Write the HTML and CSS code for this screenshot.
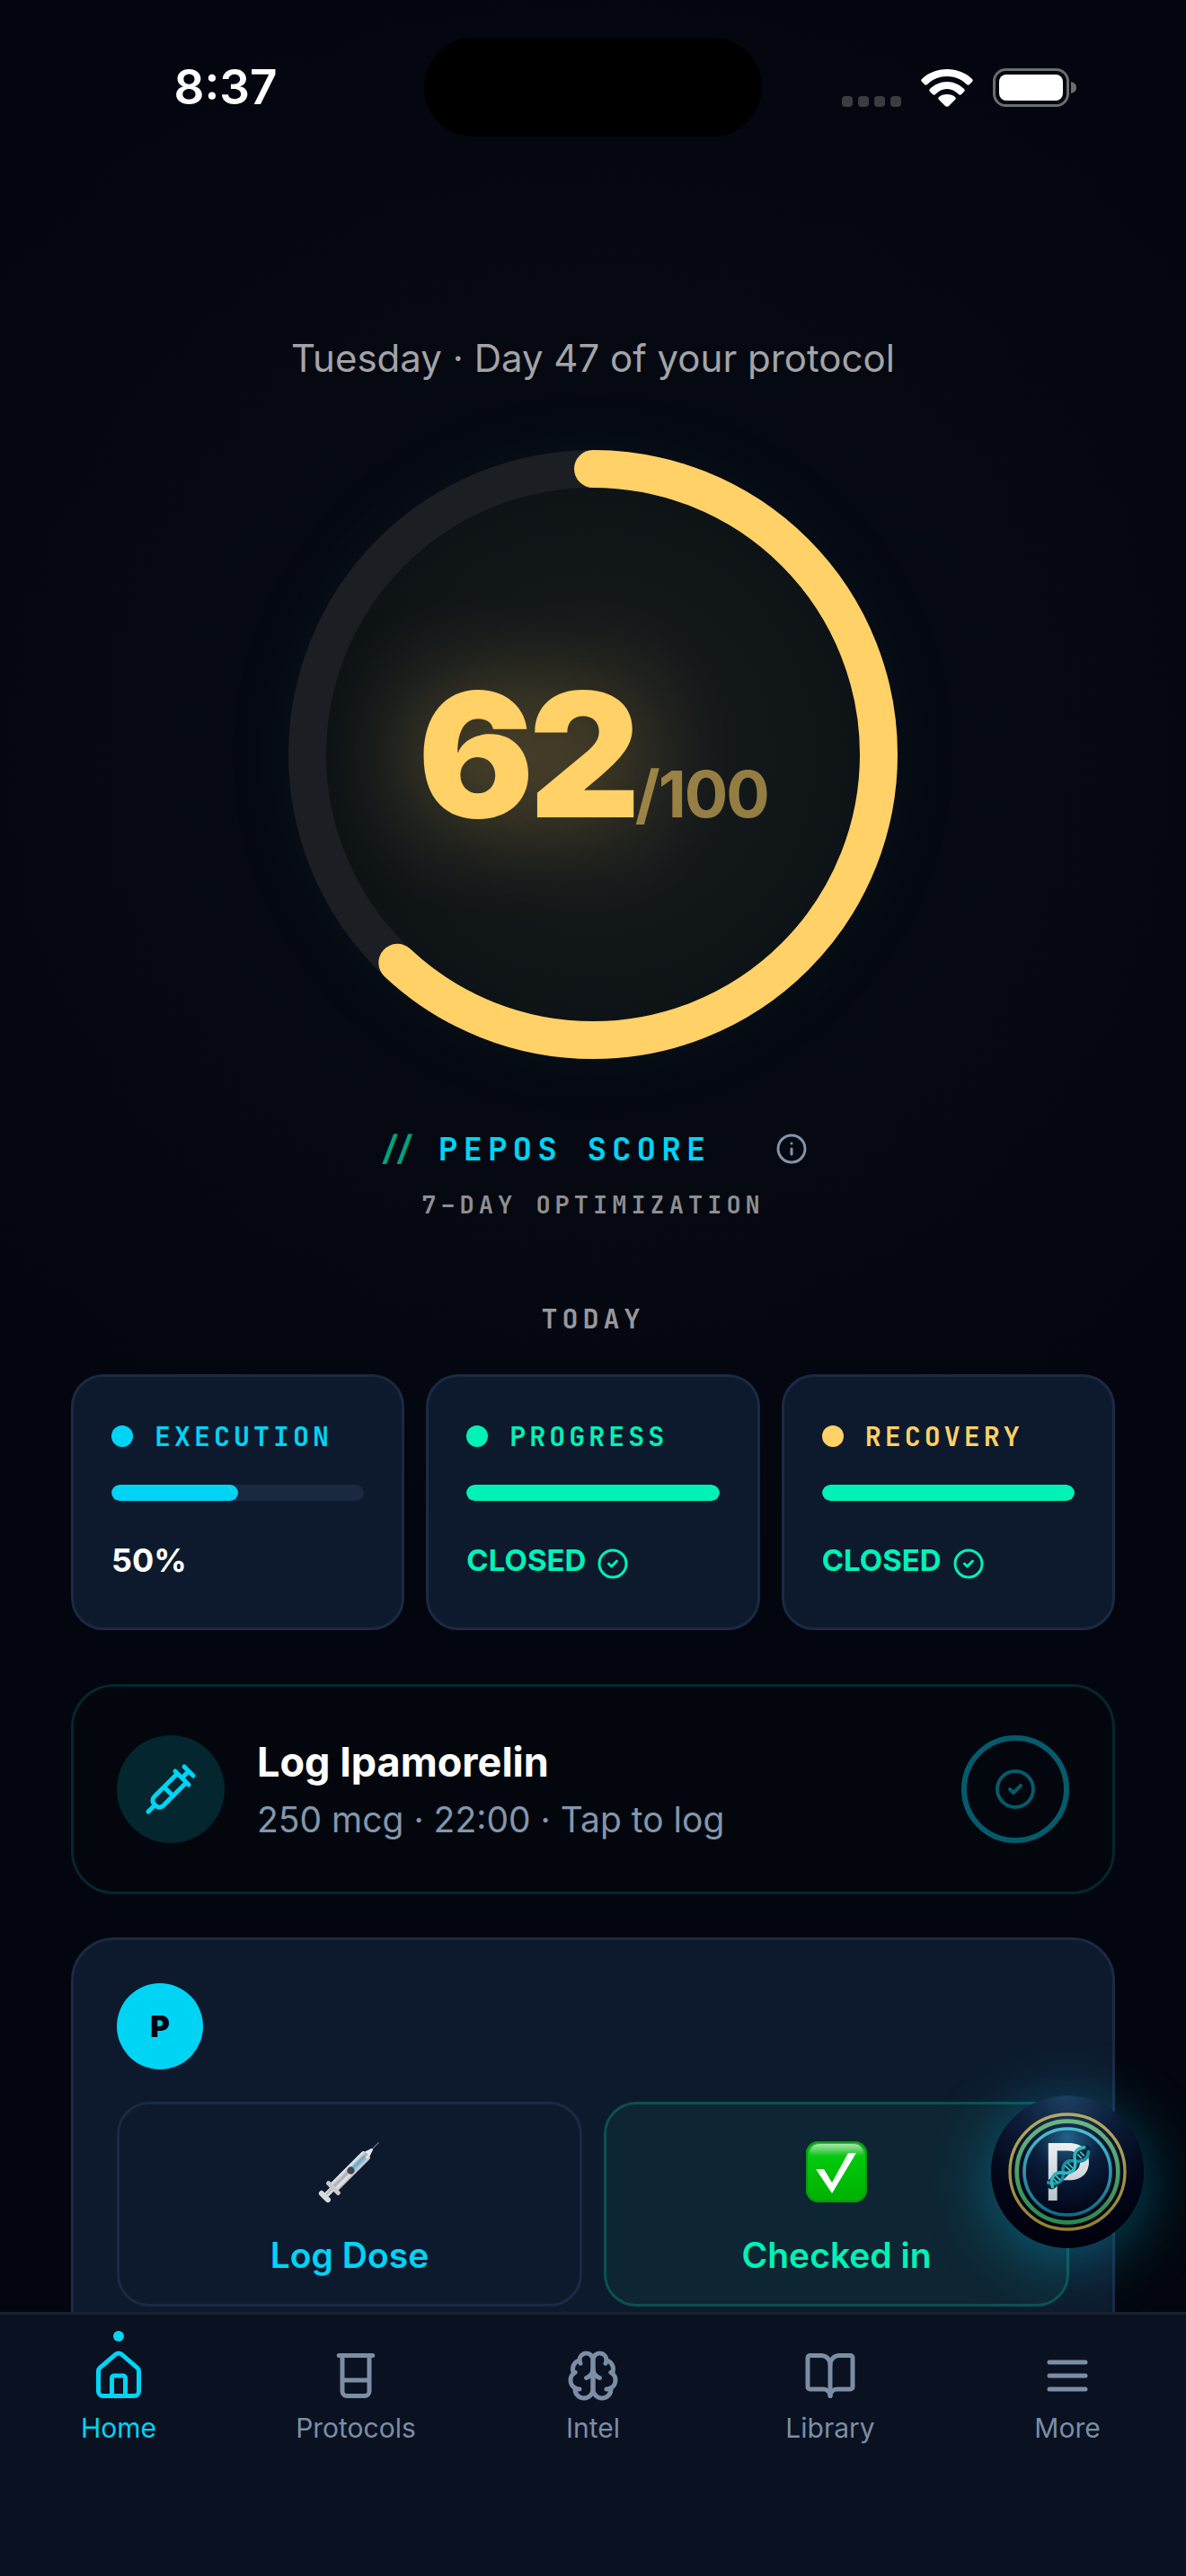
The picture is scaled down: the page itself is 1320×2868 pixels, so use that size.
FILE: index.html
```html
<!DOCTYPE html>
<html lang="en">
<head>
    <meta charset="UTF-8">
    <meta name="viewport" content="width=device-width, initial-scale=1.0">
    <title>PepOS</title>
    <link rel="stylesheet" href="styles.css">
</head>
<body>
    <div class="app">
        <header class="status-bar">
            <time class="status-time">8:37</time>
            <div class="island"></div>
            <div class="status-icons">
                <svg class="signal" viewBox="0 0 66 12" aria-hidden="true">
                    <rect x="0" width="12" height="12" rx="4"/>
                    <rect x="18" width="12" height="12" rx="4"/>
                    <rect x="36" width="12" height="12" rx="4"/>
                    <rect x="54" width="12" height="12" rx="4"/>
                </svg>
                <svg class="wifi" viewBox="0 0 58 42" aria-hidden="true">
                    <path d="M29 0C40 0 50 4 57 11c1 1 1 2 0 3l-3 3c-1 1-2 1-3 0-6-6-14-9-22-9S13 11 7 17c-1 1-2 1-3 0l-3-3c-1-1-1-2 0-3C8 4 18 0 29 0z"/>
                    <path d="M29 14c7 0 14 3 19 8 1 1 1 2 0 3l-3 3c-1 1-2 1-3 0-4-4-8-6-13-6s-9 2-13 6c-1 1-2 1-3 0l-3-3c-1-1-1-2 0-3 5-5 12-8 19-8z"/>
                    <path d="M29 28c4 0 7 1 9 3 1 1 1 2 0 3l-7 7c-1 1-3 1-4 0l-7-7c-1-1-1-2 0-3 2-2 5-3 9-3z"/>
                </svg>
                <svg class="battery" viewBox="0 0 93 43" aria-hidden="true">
                    <rect x="1.500" y="1.500" width="82" height="40" rx="13" class="battery-shell"/>
                    <rect x="7" y="7" width="71" height="29" rx="8" fill="#fff"/>
                    <path d="M87 15c4 1 6 3 6 6.500s-2 5.500-6 6.500z" class="battery-cap"/>
                </svg>
            </div>
        </header>

        <main class="screen">
            <section class="hero">
                <p class="day">Tuesday · Day 47 of your protocol</p>
                <div class="ring">
                    <svg class="ring-svg" viewBox="0 0 678 678" aria-hidden="true">
                        <circle class="ring-track" cx="339" cy="339" r="318"/>
                        <circle class="ring-fill" cx="339" cy="339" r="318" pathLength="100" stroke-dasharray="62 100" transform="rotate(-90 339 339)"/>
                    </svg>
                    <p class="score"><span class="score-value">62</span><span class="score-max">/100</span></p>
                </div>
                <div class="score-row">
                    <span class="slashes">//</span>
                    <h1 class="score-title">PEPOS SCORE</h1>
                    <button class="info-btn" type="button" aria-label="About the score">
                        <svg class="icon" viewBox="0 0 24 24"><circle cx="12" cy="12" r="10"/><path d="M12 16v-4M12 8h.01"/></svg>
                    </button>
                </div>
                <p class="score-sub">7–DAY OPTIMIZATION</p>
            </section>

            <h2 class="today">TODAY</h2>
            <section class="stats">
                <article class="card stat cyan">
                    <h3 class="stat-head"><span class="dot"></span>EXECUTION</h3>
                    <div class="bar"><div class="bar-fill" style="width: 50%"></div></div>
                    <p class="stat-value"><span>50%</span></p>
                </article>
                <article class="card stat green">
                    <h3 class="stat-head"><span class="dot"></span>PROGRESS</h3>
                    <div class="bar"><div class="bar-fill closed" style="width: 100%"></div></div>
                    <p class="stat-value is-closed"><span>CLOSED</span>
                        <svg class="icon" viewBox="0 0 24 24"><circle cx="12" cy="12" r="10"/><path d="m9 12 2 2 4-4"/></svg>
                    </p>
                </article>
                <article class="card stat yellow">
                    <h3 class="stat-head"><span class="dot"></span>RECOVERY</h3>
                    <div class="bar"><div class="bar-fill closed" style="width: 100%"></div></div>
                    <p class="stat-value is-closed"><span>CLOSED</span>
                        <svg class="icon" viewBox="0 0 24 24"><circle cx="12" cy="12" r="10"/><path d="m9 12 2 2 4-4"/></svg>
                    </p>
                </article>
            </section>

            <button class="log-card" type="button">
                <span class="log-icon">
                    <svg class="icon" viewBox="0 0 24 24"><path d="m18 2 4 4M17 7l3-3M19 9 8.700 19.300c-1 1-2.500 1-3.400 0l-.6-.6c-1-1-1-2.500 0-3.400L15 5M9 11l4 4M5 19l-3 3M14 4l6 6"/></svg>
                </span>
                <span class="log-text">
                    <span class="log-title">Log Ipamorelin</span>
                    <span class="log-sub">250 mcg · 22:00 · Tap to log</span>
                </span>
                <span class="log-check">
                    <svg class="icon" viewBox="0 0 24 24"><circle cx="12" cy="12" r="10"/><path d="m9 12 2 2 4-4"/></svg>
                </span>
            </button>

            <section class="card coach">
                <div class="avatar">P</div>
                <div class="actions">
                    <button class="action" type="button">
                        <svg class="emoji" viewBox="0 0 72 72" aria-hidden="true">
                            <defs>
                                <linearGradient id="barrel" x1="0" x2="1">
                                    <stop offset="0" stop-color="#f2f2f4"/>
                                    <stop offset=".45" stop-color="#a9a9b0"/>
                                    <stop offset=".7" stop-color="#e9e9ec"/>
                                    <stop offset="1" stop-color="#b9b9bf"/>
                                </linearGradient>
                                <linearGradient id="liquid" x1="0" x2="1">
                                    <stop offset="0" stop-color="#cfe6f0"/>
                                    <stop offset=".4" stop-color="#6fa3bf"/>
                                    <stop offset="1" stop-color="#a9cbdc"/>
                                </linearGradient>
                            </defs>
                            <g transform="translate(36 36) rotate(45)">
                                <path d="M0-46V-34" stroke="#7c8793" stroke-width="1"/>
                                <path d="M-1-36h2l3 9h-8z" fill="#dcecef"/>
                                <rect x="-3" y="22" width="6" height="17" fill="url(#barrel)"/>
                                <rect x="-6" y="-28" width="12" height="54" rx="3" fill="url(#barrel)"/>
                                <rect x="-4" y="-24" width="8" height="21" rx="1" fill="url(#liquid)"/>
                                <ellipse cx="0" cy="-2" rx="4" ry="4" fill="#3d4650"/>
                                <rect x="-10" y="23" width="20" height="5" rx="2" fill="#c9c9cf"/>
                                <rect x="-8" y="36" width="16" height="6" rx="3" fill="#dadadd"/>
                            </g>
                        </svg>
                        <span>Log Dose</span>
                    </button>
                    <button class="action done" type="button">
                        <svg class="emoji" viewBox="0 0 72 72" aria-hidden="true">
                            <defs>
                                <linearGradient id="tile" y2="1" x2="0">
                                    <stop offset="0" stop-color="#2fc03a"/>
                                    <stop offset=".3" stop-color="#00c80c"/>
                                    <stop offset="1" stop-color="#00b000"/>
                                </linearGradient>
                                <linearGradient id="shine" y2="1" x2="0">
                                    <stop offset="0" stop-color="#fff" stop-opacity=".6"/>
                                    <stop offset="1" stop-color="#fff" stop-opacity="0"/>
                                </linearGradient>
                            </defs>
                            <rect x="2" y="2" width="68" height="68" rx="14" fill="url(#tile)"/>
                            <rect x="3" y="3" width="66" height="66" rx="13" fill="none" stroke="#0a9a12" stroke-width="2"/>
                            <path d="M6 18C6 9 10 5 18 5h36c8 0 12 4 12 13z" fill="url(#shine)"/>
                            <path d="M13 33h9l9 15 18-33h9L31 60z" fill="#fff"/>
                        </svg>
                        <span>Checked in</span>
                    </button>
                </div>
            </section>
        </main>

        <button class="fab" type="button" aria-label="Open assistant">
            <svg viewBox="0 0 510 510" aria-hidden="true">
                <defs>
                    <radialGradient id="orb" cx=".5" cy="0" r="1">
                        <stop offset="0" stop-color="#1d4063"/>
                        <stop offset=".35" stop-color="#0c1c38"/>
                        <stop offset=".7" stop-color="#020618"/>
                        <stop offset="1" stop-color="#00000c"/>
                    </radialGradient>
                    <radialGradient id="core" cx=".5" cy=".1" r=".9">
                        <stop offset="0" stop-color="#23628a"/>
                        <stop offset=".45" stop-color="#0a1d3c"/>
                        <stop offset="1" stop-color="#010515"/>
                    </radialGradient>
                    <linearGradient id="gold" x2="0" y2="1"><stop offset="0" stop-color="#b5a964"/><stop offset="1" stop-color="#91812f"/></linearGradient>
                    <linearGradient id="leaf" x2="0" y2="1"><stop offset="0" stop-color="#6cb582"/><stop offset="1" stop-color="#2c8a4c"/></linearGradient>
                    <linearGradient id="aqua" x2="0" y2="1"><stop offset="0" stop-color="#4fbdd0"/><stop offset="1" stop-color="#0b6d85"/></linearGradient>
                    <linearGradient id="steel" x2="0" y2="1"><stop offset="0" stop-color="#ffffff"/><stop offset="1" stop-color="#a9b5bf"/></linearGradient>
                </defs>
                <circle cx="255" cy="255" r="255" fill="url(#orb)"/>
                <circle cx="255" cy="255" r="145" fill="url(#core)"/>
                <g fill="none">
                    <circle cx="255" cy="255" r="192" stroke="url(#gold)" stroke-width="10"/>
                    <circle cx="255" cy="255" r="169" stroke="url(#leaf)" stroke-width="14"/>
                    <circle cx="255" cy="255" r="144" stroke="url(#aqua)" stroke-width="11"/>
                </g>
                <text x="170" y="350" class="fab-letter">P</text>
                <g transform="translate(259 240) rotate(-45)" fill="none" stroke-linecap="round">
                    <path d="M-80 0H80" stroke="#06243a" stroke-width="34"/>
                    <path d="M-84-12C-68 20-42 20-26 0S12-26 30 0 66 24 84 10" stroke="#1c8f9e" stroke-width="11"/>
                    <path d="M-84 8C-68-22-42-22-26 0S12 26 30 0 66-24 84-10" stroke="#2fb5bd" stroke-width="11"/>
                    <path d="M-62-8v16M-50-8v16M-4-10v20M8-10v20M52-8v16M64-8v16" stroke="#3ccfce" stroke-width="5"/>
                </g>
            </svg>
        </button>

        <nav class="tab-bar">
            <a class="tab active" href="#home">
                <span class="tab-dot"></span>
                <svg class="icon" viewBox="0 0 24 24"><path d="M15 21v-8a1 1 0 0 0-1-1h-4a1 1 0 0 0-1 1v8"/><path d="M3 10a2 2 0 0 1 .709-1.528l7-5.999a2 2 0 0 1 2.582 0l7 5.999A2 2 0 0 1 21 10v9a2 2 0 0 1-2 2H5a2 2 0 0 1-2-2z"/></svg>
                <span>Home</span>
            </a>
            <a class="tab" href="#protocols">
                <span class="tab-dot"></span>
                <svg class="icon" viewBox="0 0 24 24"><path d="M4.500 3h15M6 3v16a2 2 0 0 0 2 2h8a2 2 0 0 0 2-2V3M6 14h12"/></svg>
                <span>Protocols</span>
            </a>
            <a class="tab" href="#intel">
                <span class="tab-dot"></span>
                <svg class="icon" viewBox="0 0 24 24"><path d="M12 5a3 3 0 1 0-5.997.125 4 4 0 0 0-2.526 5.770 4 4 0 0 0 .556 6.588A4 4 0 1 0 12 18Z"/><path d="M12 5a3 3 0 1 1 5.997.125 4 4 0 0 1 2.526 5.770 4 4 0 0 1-.556 6.588A4 4 0 1 1 12 18Z"/><path d="M15 13a4.500 4.500 0 0 1-3-4 4.500 4.500 0 0 1-3 4"/><path d="M17.599 6.500a3 3 0 0 0 .399-1.375M6.003 5.125A3 3 0 0 0 6.401 6.500M3.477 10.896a4 4 0 0 1 .585-.396M19.938 10.500a4 4 0 0 1 .585.396M6 18a4 4 0 0 1-1.967-.516M19.967 17.484A4 4 0 0 1 18 18"/></svg>
                <span>Intel</span>
            </a>
            <a class="tab" href="#library">
                <span class="tab-dot"></span>
                <svg class="icon" viewBox="0 0 24 24"><path d="M12 7v14"/><path d="M3 18a1 1 0 0 1-1-1V4a1 1 0 0 1 1-1h5a4 4 0 0 1 4 4 4 4 0 0 1 4-4h5a1 1 0 0 1 1 1v13a1 1 0 0 1-1 1h-6a3 3 0 0 0-3 3 3 3 0 0 0-3-3z"/></svg>
                <span>Library</span>
            </a>
            <a class="tab" href="#more">
                <span class="tab-dot"></span>
                <svg class="icon" viewBox="0 0 24 24"><path d="M4 6h16M4 12h16M4 18h16"/></svg>
                <span>More</span>
            </a>
        </nav>
    </div>
</body>
</html>
```
FILE: styles.css
```css
:root {
    --cyan: #00d4f5;
    --green: #00f2b6;
    --yellow: #ffd166;
    --muted: #8294ab;
    --card: #0d1a2d;
    --line: #1a2a44;
    --mono: 'JetBrains Mono', 'DejaVu Sans Mono', monospace;
}
* {
    margin: 0;
    padding: 0;
    box-sizing: border-box;
}
body {
    font-family: Inter, 'Liberation Sans', sans-serif;
    background: #03060e;
    color: #fff;
}
button {
    font: inherit;
    color: inherit;
    background: none;
    border: none;
    cursor: pointer;
}
.icon {
    display: block;
    fill: none;
    stroke: currentColor;
    stroke-width: 2;
    stroke-linecap: round;
    stroke-linejoin: round;
}
.app {
    position: relative;
    height: 100vh;
    display: flex;
    flex-direction: column;
    background: radial-gradient(circle at 50% 840px, #060b14 0, #050810 600px, #03060e 900px);
}

/* status bar */
.status-bar {
    display: grid;
    grid-template-columns: 1fr 376px 1fr;
    align-items: center;
    padding-top: 42px;
}
.status-time {
    padding-left: 30px;
    text-align: center;
    font-size: 53px;
    line-height: 60px;
    font-weight: 600;
}
.island {
    height: 110px;
    border-radius: 55px;
    background: #000;
}
.status-icons {
    display: flex;
    justify-content: center;
    align-items: flex-end;
    gap: 22px;
    padding-right: 34px;
}
.signal {
    width: 66px;
    height: 12px;
    fill: #3a3c42;
}
.wifi {
    width: 58px;
    height: 42px;
    fill: #fff;
}
.battery {
    width: 93px;
    height: 43px;
}
.battery-shell {
    fill: none;
    stroke: #6c6d70;
    stroke-width: 3;
}
.battery-cap {
    fill: #6c6d70;
}

.screen {
    flex: 1;
    min-height: 0;
    overflow-y: auto;
    scrollbar-width: none;
    padding: 223px 79px 48px;
}

/* score ring */
.hero {
    display: flex;
    flex-direction: column;
    align-items: center;
}
.day {
    font-size: 42px;
    line-height: 48px;
    color: #a3a4a7;
}
.ring {
    display: grid;
    place-items: center;
    width: 678px;
    margin-top: 78px;
    border-radius: 50%;
    background: radial-gradient(circle closest-side, #191c1b 0, #12171a 55%, #0b1114 100%);
    box-shadow: 0 0 80px rgba(60, 120, 130, 0.08);
}
.ring-svg,
.score {
    grid-area: 1 / 1;
}
.ring-svg {
    width: 100%;
    fill: none;
    stroke-width: 42;
    stroke-linecap: round;
}
.ring-track {
    stroke: #1b1e23;
}
.ring-fill {
    stroke: var(--yellow);
}
.score {
    display: flex;
    align-items: baseline;
    color: var(--yellow);
}
.score-value {
    font-size: 192px;
    line-height: 192px;
    font-weight: 900;
    letter-spacing: -6px;
    text-shadow: 0 0 120px rgba(255, 209, 102, 0.45);
}
.score-max {
    font-size: 72px;
    font-weight: 700;
    letter-spacing: -2px;
    opacity: 0.55;
}
.score-row {
    display: flex;
    align-items: center;
    gap: 24px;
    margin-top: 76px;
    font-family: var(--mono);
    font-size: 36px;
    line-height: 48px;
}
.slashes {
    font-weight: 700;
    color: #00a37d;
}
.score-title {
    font-size: 36px;
    font-weight: 700;
    letter-spacing: 6px;
    color: var(--cyan);
}
.info-btn {
    margin-left: 48px;
    color: var(--muted);
}
.info-btn .icon,
.stat-value .icon {
    width: 36px;
    height: 36px;
}
.score-sub {
    margin-top: 20px;
    font-family: var(--mono);
    font-size: 27px;
    line-height: 36px;
    font-weight: 700;
    letter-spacing: 5px;
    color: #8e8f92;
}

/* today cards */
.today {
    margin: 91px 0 44px;
    text-align: center;
    font-family: var(--mono);
    font-size: 30px;
    line-height: 36px;
    letter-spacing: 5px;
    color: #97989b;
}
.card {
    background: var(--card);
    border: 3px solid var(--line);
    border-radius: 36px;
}
.stats {
    display: grid;
    grid-template-columns: repeat(3, 1fr);
    gap: 24px;
}
.stat {
    padding: 48px 42px 53px;
}
.cyan {
    color: var(--cyan);
}
.green {
    color: var(--green);
}
.yellow {
    color: var(--yellow);
}
.stat-head {
    display: flex;
    align-items: center;
    gap: 24px;
    font-family: var(--mono);
    font-size: 30px;
    line-height: 36px;
    letter-spacing: 4px;
}
.dot {
    width: 24px;
    height: 24px;
    border-radius: 50%;
    background: currentColor;
}
.bar {
    height: 18px;
    margin: 36px 0 48px;
    border-radius: 9px;
    background: #1a2840;
    overflow: hidden;
}
.bar-fill {
    height: 100%;
    border-radius: 9px;
    background: var(--cyan);
}
.bar-fill.closed {
    background: var(--green);
}
.stat-value {
    display: flex;
    gap: 12px;
    height: 40px;
    font-size: 36px;
    line-height: 36px;
    font-weight: 700;
    color: #fff;
}
.stat-value.is-closed {
    font-size: 33px;
    color: var(--green);
}
.stat-value .icon {
    align-self: flex-end;
}

/* log card */
.log-card {
    display: flex;
    align-items: center;
    gap: 36px;
    width: 100%;
    margin: 60px 0 48px;
    padding: 54px 48px;
    text-align: left;
    background: #03070d;
    border: 3px solid #05262f;
    border-radius: 48px;
}
.log-icon,
.log-check {
    display: grid;
    place-items: center;
    width: 120px;
    height: 120px;
    border-radius: 50%;
}
.log-icon {
    background: #04262f;
    color: var(--cyan);
}
.log-icon .icon {
    width: 60px;
    height: 60px;
}
.log-text {
    flex: 1;
    display: flex;
    flex-direction: column;
    gap: 8px;
}
.log-title {
    font-size: 45px;
    line-height: 60px;
    font-weight: 700;
}
.log-sub {
    font-size: 39px;
    line-height: 52px;
    color: #8496ac;
}
.log-check {
    border: 6px solid #045b6b;
    color: #045b6b;
}
.log-check .icon {
    width: 48px;
    height: 48px;
}

/* coach card */
.coach {
    padding: 48px;
    border-radius: 48px;
}
.avatar {
    width: 96px;
    height: 96px;
    border-radius: 50%;
    background: var(--cyan);
    color: #03060e;
    font-size: 33px;
    line-height: 96px;
    font-weight: 900;
    text-align: center;
}
.actions {
    display: grid;
    grid-template-columns: 1fr 1fr;
    gap: 24px;
    margin-top: 36px;
}
.action {
    display: flex;
    flex-direction: column;
    align-items: center;
    gap: 33px;
    padding: 39px 24px 30px;
    border: 3px solid var(--line);
    border-radius: 36px;
    font-size: 39px;
    line-height: 48px;
    font-weight: 600;
    color: var(--cyan);
}
.action.done {
    background: #0e2533;
    border-color: #0c504f;
    color: var(--green);
}
.emoji {
    width: 72px;
    height: 72px;
}

.fab {
    position: absolute;
    right: 47px;
    bottom: 365px;
    width: 170px;
    height: 170px;
    border-radius: 50%;
    box-shadow: 0 12px 72px rgba(0, 190, 225, 0.4);
}
.fab svg {
    display: block;
    width: 100%;
}
.fab-letter {
    font-size: 264px;
    font-weight: 500;
    fill: url(#steel);
}

/* tab bar */
.tab-bar {
    position: relative;
    display: grid;
    grid-template-columns: repeat(5, 1fr);
    padding: 18px 0 147px;
    background: #0a1120;
    border-top: 3px solid #1a212e;
}
.tab {
    display: flex;
    flex-direction: column;
    align-items: center;
    font-size: 30px;
    line-height: 36px;
    color: #7b8ea5;
    text-decoration: none;
}
.tab .icon {
    width: 60px;
    height: 60px;
    margin: 8px 0 10px;
}
.tab-dot {
    width: 12px;
    height: 12px;
    border-radius: 50%;
}
.tab.active {
    color: var(--cyan);
}
.tab.active .tab-dot {
    background: currentColor;
}
```
